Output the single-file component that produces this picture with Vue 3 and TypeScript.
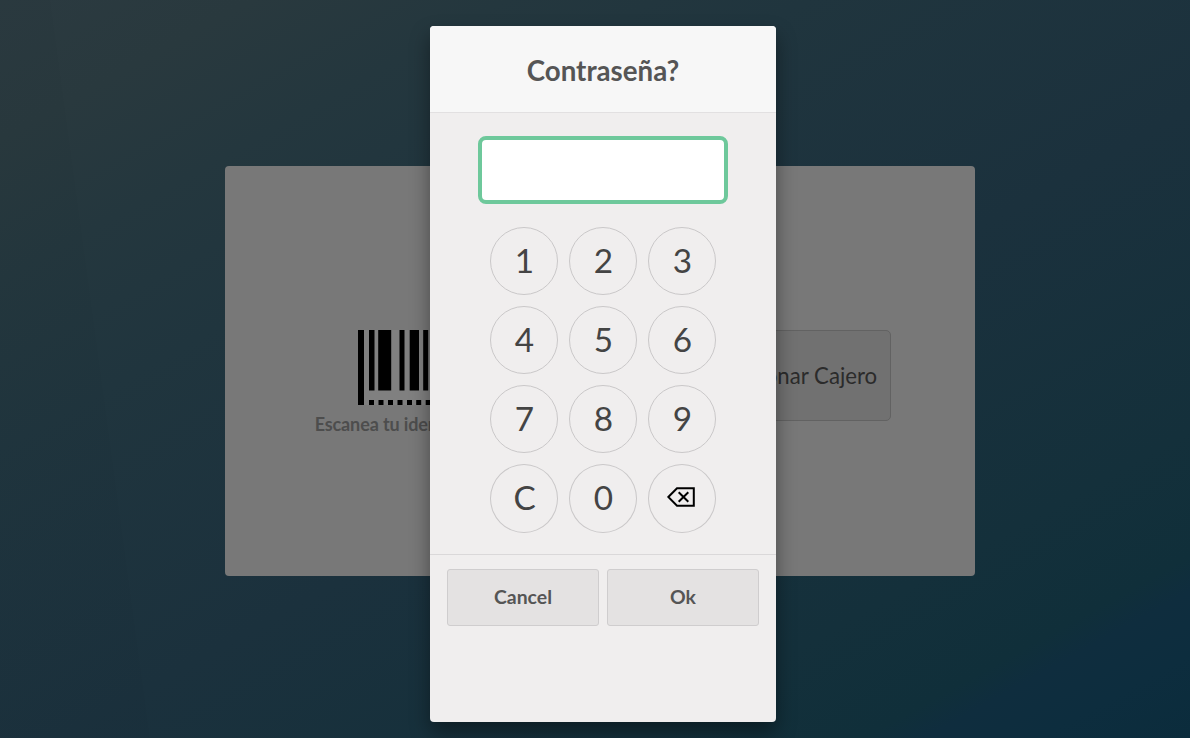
<script setup lang="ts">
import { ref } from 'vue'

const keys: string[] = ['1', '2', '3', '4', '5', '6', '7', '8', '9', 'C', '0', 'back']
const pin = ref<string>('')

function press(key: string): void {
  if (key === 'C') pin.value = ''
  else if (key === 'back') pin.value = pin.value.slice(0, -1)
  else pin.value += key
}
</script>

<template>
  <main class="screen">
    <section class="login">
      <div class="column scan">
        <svg class="barcode" width="109" height="75" viewBox="0 0 109 75">
          <rect class="paper" width="109" height="75" />
          <path d="M0 0h6v75H0zM11 0h5.5v60.5H11zM20.2 0h13v60.5h-13zM41.5 0h5v60.5h-5zM51.7 0h9.3v60.5h-9.3zM65.2 0h5v60.5h-5zM75 0h10v60.5H75zM90 0h5v60.5h-5zM103 0h6v75h-6z" />
          <path d="M11 70h5v5h-5zM20.5 70h5v5h-5zM30 70h5v5h-5zM39.5 70h5v5h-5zM49 70h5v5h-5zM58.2 70h5v5h-5zM67.7 70h5v5h-5zM77 70h5v5h-5zM86.5 70h5v5h-5z" />
        </svg>
        <span class="hint">Escanea tu identificación</span>
      </div>
      <div class="column">
        <button class="select">Seleccionar Cajero</button>
      </div>
    </section>

    <div class="popup">
      <header class="title">Contraseña?</header>
      <div class="value">{{ '•'.repeat(pin.length) }}</div>
      <div class="keypad">
        <button v-for="key in keys" :key="key" class="key" @click="press(key)">
          <svg v-if="key === 'back'" class="erase" width="28" height="20" viewBox="0 0 28 20">
            <path d="M1.3 10 10 1.2H26.8V18.8H10zM11.7 5.2l9.6 9.6M21.3 5.2l-9.6 9.6" />
          </svg>
          <template v-else>{{ key }}</template>
        </button>
      </div>
      <footer class="footer">
        <button class="action">Cancel</button>
        <button class="action">Ok</button>
      </footer>
    </div>
  </main>
</template>

<style>
body {
  overflow: hidden;
}
</style>

<style scoped>
.screen {
  position: relative;
  box-sizing: border-box;
  width: 1190px;
  height: 738px;
  padding: 166px 215px 0 225px;
  overflow: hidden;
  background:
    linear-gradient(82.3deg, rgba(0, 0, 0, 0.025) 148px, transparent 149px),
    linear-gradient(151deg, #2b3a40 0%, #29393e 10%, #24373e 20%, #20353e 32%, #1b313d 55%, #14303b 78%, #102f3a 87%, #0f2d3e 89.5%, #0d2d3e 94%, #0b2c3c 100%);
  font-family: Lato, sans-serif;
}
button {
  padding: 0;
  font-family: inherit;
}
.login {
  display: flex;
  align-items: flex-start;
  box-sizing: border-box;
  height: 410px;
  padding-top: 164px;
  border-radius: 4px;
  background: #787878;
}
.column {
  display: flex;
  flex: 1;
  justify-content: center;
}
.scan {
  flex-direction: column;
  align-items: center;
}
.barcode {
  display: block;
}
.paper {
  fill: #808080;
}
.hint {
  margin-top: 8px;
  color: #4d4d4d;
  font-size: 18px;
  font-weight: 700;
  letter-spacing: -0.12px;
  line-height: 22px;
  white-space: nowrap;
}
.select {
  box-sizing: border-box;
  width: 207px;
  height: 91px;
  border: 1px solid #626262;
  border-radius: 5px;
  background: #717171;
  color: #2b2b2b;
  font-size: 22.2px;
}
.popup {
  position: absolute;
  top: 26px;
  left: 430px;
  width: 346px;
  height: 696px;
  border-radius: 4px;
  background: #f0eeee;
  box-shadow: 0 10px 20px rgba(0, 0, 0, 0.4);
}
.title {
  height: 86px;
  border-bottom: 1px solid #e2e0e1;
  border-radius: 4px 4px 0 0;
  background: #f7f7f7;
  color: #555;
  font-size: 27.7px;
  font-weight: 700;
  line-height: 90px;
  text-align: center;
}
.value {
  box-sizing: border-box;
  width: 250px;
  height: 68px;
  margin: 23px auto;
  border: 4px solid #6ec89b;
  border-radius: 8px;
  background: #fff;
  font-size: 32px;
  line-height: 60px;
  text-align: center;
}
.keypad {
  display: grid;
  grid-template-columns: repeat(3, 68px);
  grid-template-rows: 68px 68px 68px 69px;
  gap: 11px;
  justify-content: center;
}
.key {
  display: flex;
  align-items: center;
  justify-content: center;
  padding: 0 0 2px 1px;
  border: 1px solid #cac8c9;
  border-radius: 50%;
  background: transparent;
  color: #444;
  font-size: 33.3px;
}
.key:nth-child(n + 10) {
  padding-bottom: 3px;
}
.erase {
  margin: 0 3px 0 0;
  fill: none;
  stroke: #000;
  stroke-width: 2;
}
.footer {
  display: flex;
  gap: 8px;
  margin-top: 21px;
  padding: 14px 17px;
  border-top: 1px solid #dad8d9;
}
.action {
  box-sizing: border-box;
  width: 152px;
  height: 57px;
  padding-bottom: 2px;
  border: 1px solid #cfcdce;
  border-radius: 3px;
  background: #e4e2e2;
  color: #555;
  font-size: 19.4px;
  font-weight: 700;
}
</style>
